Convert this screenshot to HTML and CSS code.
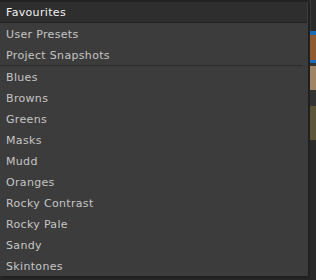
FILE: index.html
```
<!DOCTYPE html>
<html lang="en">
<head>
    <meta charset="UTF-8">
    <title>Favourites</title>
    <link rel="stylesheet" href="styles.css">
</head>
<body>
    <div class="stage">
        <div class="menu">
            <div class="menu_header">Favourites</div>
            <div class="menu_group">
                <div class="menu_item">User Presets</div>
                <div class="menu_item">Project Snapshots</div>
            </div>
            <div class="menu_group">
                <div class="menu_item">Blues</div>
                <div class="menu_item">Browns</div>
                <div class="menu_item">Greens</div>
                <div class="menu_item">Masks</div>
                <div class="menu_item">Mudd</div>
                <div class="menu_item">Oranges</div>
                <div class="menu_item">Rocky Contrast</div>
                <div class="menu_item">Rocky Pale</div>
                <div class="menu_item">Sandy</div>
                <div class="menu_item">Skintones</div>
            </div>
        </div>
        <div class="side">
            <div class="side_top"></div>
            <div class="swatch swatch_blue"></div>
            <div class="swatch swatch_brown"></div>
            <div class="swatch swatch_blue2"></div>
            <div class="swatch swatch_gap"></div>
            <div class="swatch swatch_tan"></div>
            <div class="swatch swatch_dark"></div>
            <div class="swatch swatch_olive"></div>
        </div>
    </div>
</body>
</html>
```

FILE: styles.css
```
* {
    margin: 0;
    padding: 0;
    box-sizing: border-box;
}

body {
    background: #272727;
    font-family: "DejaVu Sans", Verdana, sans-serif;
    font-size: 11px;
    letter-spacing: 0.33px;
}

.stage {
    display: flex;
    width: 316px;
    height: 280px;
}

.menu {
    width: 308px;
    height: 276px;
    background: #3c3c3c;
    border-top: 2px solid #232323;
    box-shadow: 2px 2px 2px #202020;
}

.menu_header {
    height: 21px;
    line-height: 21px;
    padding-left: 6px;
    background: #2e2e2e;
    color: #f2f2f2;
    border-bottom: 1px solid #222;
    margin-right: 1px;
}

.menu_group {
    margin-right: 5px;
}

.menu_group + .menu_group {
    border-top: 1px solid #2a2a2a;
}

.menu_item {
    height: 21px;
    line-height: 18px;
    padding-top: 3px;
    padding-left: 6px;
    color: #c6c6c6;
}

.side {
    flex: 1;
    display: flex;
    flex-direction: column;
    margin-left: 2px;
    background: #2a2a2a;
}

.side_top {
    height: 31px;
    border-left: 1px solid #3a3a3a;
}

.swatch_blue {
    height: 4px;
    background: #1d6ab8;
}

.swatch_brown {
    height: 25px;
    background: #8e5a32;
}

.swatch_blue2 {
    height: 3px;
    background: #1d6ab8;
}

.swatch_gap {
    height: 3px;
    background: #333;
}

.swatch_tan {
    height: 24px;
    background: #a08466;
}

.swatch_dark {
    height: 16px;
    background: #333;
}

.swatch_olive {
    height: 34px;
    background: #5c5538;
}
```
